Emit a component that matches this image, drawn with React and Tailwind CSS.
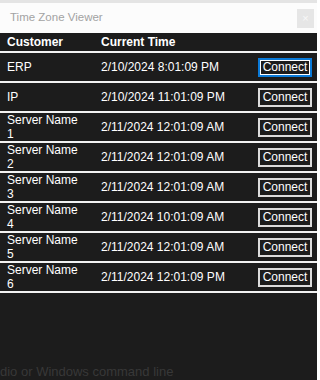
const rows = [
  { name: "ERP", time: "2/10/2024 8:01:09 PM", focused: true },
  { name: "IP", time: "2/10/2024 11:01:09 PM" },
  { name: "Server Name 1", time: "2/11/2024 12:01:09 AM" },
  { name: "Server Name 2", time: "2/11/2024 12:01:09 AM" },
  { name: "Server Name 3", time: "2/11/2024 12:01:09 AM" },
  { name: "Server Name 4", time: "2/11/2024 10:01:09 AM" },
  { name: "Server Name 5", time: "2/11/2024 12:01:09 AM" },
  { name: "Server Name 6", time: "2/11/2024 12:01:09 PM" },
];

const App = () => {
  return (
    <div
      className="w-[317px] h-[380px] overflow-hidden bg-[#1c1c1c] flex flex-col"
      style={{ fontFamily: '"Liberation Sans", Arial, sans-serif' }}
    >
      {/* title bar */}
      <div className="h-[33px] shrink-0 bg-[#fcfcfc] border-t-[3px] border-[#e4e4e4] flex items-center">
        <div className="pl-[10px] text-[11.5px] text-[#a3a3a3]">Time Zone Viewer</div>
        <div className="ml-auto mr-[3px] w-[17px] h-[19px] bg-[#e6e6e6] flex items-center justify-center text-[11px] text-[#f8f8f8]">
          ×
        </div>
      </div>

      {/* header */}
      <div className="h-[18px] shrink-0 flex items-center text-[12px] font-bold text-white">
        <div className="w-[101px] pl-[7px]">Customer</div>
        <div>Current Time</div>
      </div>
      <div className="h-[2px] bg-[#f2f2f2] shrink-0" />

      {rows.map((row, i) => (
        <div key={i} className="shrink-0">
          <div className="h-[28px] flex items-center text-[12px] text-white">
            <div className="w-[101px] pl-[7px] pr-[19px] leading-[14px]">{row.name}</div>
            <div className="w-[157px] whitespace-nowrap">{row.time}</div>
            <button
              className={
                row.focused
                  ? "w-[54px] h-[19px] border-2 border-[#0a7ad8] shadow-[inset_0_0_0_1px_#ffffff] bg-[#1c1c1c] text-white text-[12px] leading-none"
                  : "w-[54px] h-[19px] border-2 border-[#dcdcdc] bg-[#1c1c1c] text-white text-[12px] leading-none"
              }
            >
              Connect
            </button>
          </div>
          <div className="h-[2px] bg-[#f2f2f2]" />
        </div>
      ))}

      <div className="mt-auto text-[13px] text-[#383838] leading-[16px]">
        dio or Windows command line
      </div>
    </div>
  );
};

export default App;
